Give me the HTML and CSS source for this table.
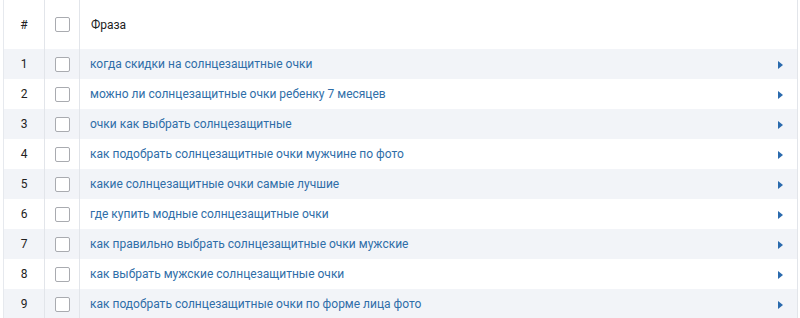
FILE: index.html
```html
<!DOCTYPE html>
<html>
<head>
<meta charset="utf-8">
<link rel="stylesheet" href="styles.css">
</head>
<body>
<div class="wrap">
<table class="grid">
  <colgroup><col class="c-num"><col class="c-chk"><col class="c-phrase"></colgroup>
  <thead>
    <tr><th class="num">#</th><th class="chk"><span class="box"></span></th><th class="phrase">Фраза</th></tr>
  </thead>
  <tbody>
    <tr><td class="num">1</td><td class="chk"><span class="box"></span></td><td class="phrase"><span class="link">когда скидки на солнцезащитные очки</span><span class="arrow"></span></td></tr>
    <tr><td class="num">2</td><td class="chk"><span class="box"></span></td><td class="phrase"><span class="link">можно ли солнцезащитные очки ребенку 7 месяцев</span><span class="arrow"></span></td></tr>
    <tr><td class="num">3</td><td class="chk"><span class="box"></span></td><td class="phrase"><span class="link">очки как выбрать солнцезащитные</span><span class="arrow"></span></td></tr>
    <tr><td class="num">4</td><td class="chk"><span class="box"></span></td><td class="phrase"><span class="link">как подобрать солнцезащитные очки мужчине по фото</span><span class="arrow"></span></td></tr>
    <tr><td class="num">5</td><td class="chk"><span class="box"></span></td><td class="phrase"><span class="link">какие солнцезащитные очки самые лучшие</span><span class="arrow"></span></td></tr>
    <tr><td class="num">6</td><td class="chk"><span class="box"></span></td><td class="phrase"><span class="link">где купить модные солнцезащитные очки</span><span class="arrow"></span></td></tr>
    <tr><td class="num">7</td><td class="chk"><span class="box"></span></td><td class="phrase"><span class="link">как правильно выбрать солнцезащитные очки мужские</span><span class="arrow"></span></td></tr>
    <tr><td class="num">8</td><td class="chk"><span class="box"></span></td><td class="phrase"><span class="link">как выбрать мужские солнцезащитные очки</span><span class="arrow"></span></td></tr>
    <tr><td class="num">9</td><td class="chk"><span class="box"></span></td><td class="phrase"><span class="link">как подобрать солнцезащитные очки по форме лица фото</span><span class="arrow"></span></td></tr>
  </tbody>
</table>
</div>
</body>
</html>
```
FILE: styles.css
```css
html, body { margin: 0; padding: 0; background: #fff; }
body { font-family: Roboto, "Noto Sans", sans-serif; font-size: 12px; color: #222; overflow: hidden; }
.wrap { padding-left: 3px; width: 795px; }
.grid { width: 795px; border-collapse: collapse; table-layout: fixed; border-left: 1px solid #e6e9ee; border-right: 1px solid #e2e5ea; }
.c-num { width: 41px; }
.c-chk { width: 35px; }
th, td { padding: 0; border-right: 1px solid #e2e5ea; vertical-align: middle; }
thead tr { height: 49px; }
th { font-weight: normal; color: #222; font-size: 12px; }
tbody tr { height: 30px; }
tbody tr:nth-child(odd) { background: #f2f4f8; }
.num { text-align: center; }
.chk { text-align: center; }
.phrase { text-align: left; padding-left: 10px; padding-right: 14px; }
th.phrase { padding-left: 11px; }
.box { display: inline-block; width: 13px; height: 13px; border: 1px solid #a9abb0; border-radius: 2px; background: #fff; vertical-align: middle; }
.link { color: #2f6ea8; }
.arrow { float: right; margin-top: 4px; width: 0; height: 0; border-top: 4px solid transparent; border-bottom: 4px solid transparent; border-left: 5px solid #2a6aad; }
```
